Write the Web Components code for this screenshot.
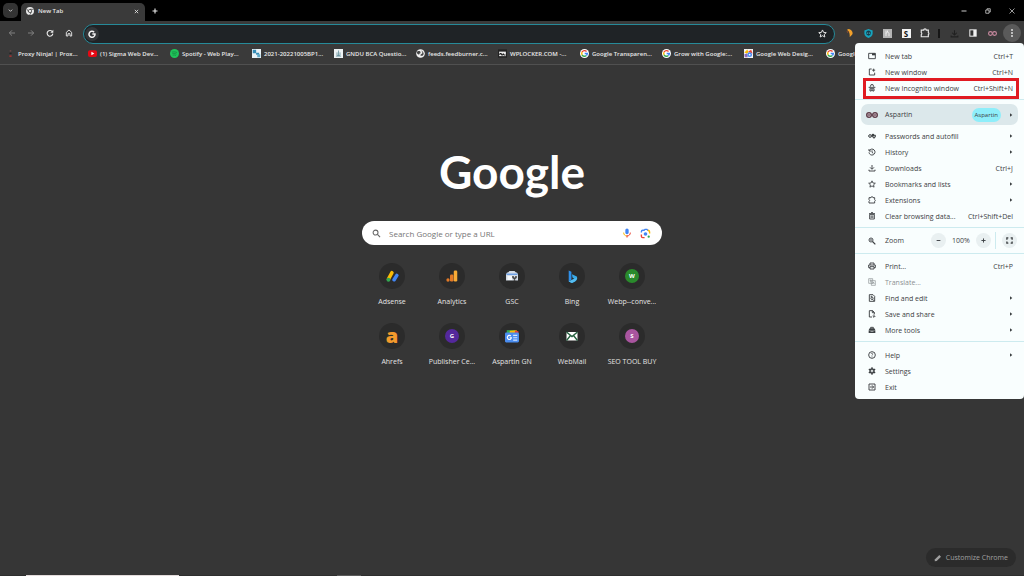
<!DOCTYPE html>
<html lang="en">
<head>
<meta charset="utf-8">
<title>New Tab</title>
<style>
html, body { margin: 0; background: #363636; }
body { font-family: "Open Sans", "Noto Sans", sans-serif; font-size: 7px; font-weight: 500; line-height: 10px; color: #e8e8e8; }
</style>
</head>
<body>
<browser-window></browser-window>
<script>
const S = 'fill="none" stroke="currentColor" stroke-width="2.8"';
const G = '<circle cx="12" cy="12" r="12" fill="#fff"/><g fill="none" stroke-width="3.8"><path d="M17.5 6.500A7.500 7.500 0 0 0 5.500 8.500" stroke="#ea4335"/><path d="M5.500 8.500a7.500 7.500 0 0 0 0 7" stroke="#fbbc05"/><path d="M5.500 15.500a7.500 7.500 0 0 0 11.500 2" stroke="#34a853"/><path d="M17 17.500a7.500 7.500 0 0 0 2.500-5.500h-7" stroke="#4285f4"/></g>';
const ICONS = {
  chevron: `<path d="M4 8l8 8 8-8" fill="none" stroke="currentColor" stroke-width="4"/>`,
  close: `<path d="M4 4l16 16M20 4L4 20" fill="none" stroke="currentColor" stroke-width="4"/>`,
  closeThin: `<path d="M2 2l20 20M22 2L2 22" fill="none" stroke="currentColor" stroke-width="3"/>`,
  plus: `<path d="M12 2v20M2 12h20" fill="none" stroke="currentColor" stroke-width="4.500"/>`,
  minus: `<path d="M3 12h18" fill="none" stroke="currentColor" stroke-width="4.500"/>`,
  minimize: `<path d="M2 12h20" fill="none" stroke="currentColor" stroke-width="4"/>`,
  restore: `<path d="M3 8h13v13H3zM8 8V3h13v13h-5" fill="none" stroke="currentColor" stroke-width="3.200"/>`,
  chrome: `<circle cx="12" cy="12" r="12" fill="#e8e8e8"/><circle cx="12" cy="12" r="5" fill="#e8e8e8" stroke="#3a3a3a" stroke-width="2"/><path d="M12 7h11M7.500 14.500L2 5M16.500 14.500L11 24" fill="none" stroke="#3a3a3a" stroke-width="2"/>`,
  back: `<path d="M21 12H4M12 4l-8 8 8 8" ${S}/>`,
  forward: `<path d="M3 12h17M12 4l8 8-8 8" ${S}/>`,
  reload: `<path d="M19.500 9A8.500 8.500 0 1 0 20.500 14" fill="none" stroke="currentColor" stroke-width="3.400"/><path d="M22 2v9h-9z" fill="currentColor"/>`,
  home: `<path d="M4 10l8-7 8 7v11h-5v-7H9v7H4z" ${S}/>`,
  gwhite: `<path d="M18.500 6.500A9 9 0 1 0 21 12h-8" fill="none" stroke="#f4f4f4" stroke-width="4.500"/>`,
  star: `<path d="M12 2.500l2.900 6.500 7.100.7-5.300 4.700 1.500 7-6.200-3.600-6.200 3.600 1.500-7L2 9.700 9.100 9z" fill="none" stroke="currentColor" stroke-width="2.600"/>`,
  crescent: `<path d="M8 0c9 0 15 6 15 13-1 5-5 8-9 11 1-8-1-17-7-20z" fill="#f2a12b"/><path d="M4 5l8 3-5 5z" fill="#7d4a30"/>`,
  shield: `<path d="M12 0l11 4v8c0 6-5 10-11 12C6 22 1 18 1 12V4z" fill="#16a5bf"/><path d="M6 9a6 5 0 0 1 12 0l-1 6-5 3-5-3z" fill="#173d4d"/><path d="M8 11h3M13 11h3" stroke="#6ae1ee" stroke-width="2"/>`,
  honey: `<path d="M0 0h24v24H0z" fill="#b4b4b4"/><path d="M8 4v15M8 12c2-5 8-4 8 1v6M12 4v4" fill="none" stroke="#eee" stroke-width="2.500"/>`,
  puzzle: `<path d="M3 5h6a3 3 0 0 1 6 0h5v6a3 3 0 0 1 0 5v5H3v-5a3 3 0 0 0 0-5z" ${S}/>`,
  download: `<path d="M12 3v12M6 10l6 6 6-6M3 17v4h18v-4" ${S}/>`,
  panel: `<path d="M1 1h22v22H1z" fill="#f2f2f2"/><path d="M4 4h9v16H4z" fill="#333"/>`,
  infinity: `<g fill="none" stroke="#c98aa0" stroke-width="3"><circle cx="6.500" cy="12" r="5"/><circle cx="17.500" cy="12" r="5"/></g>`,
  infinityDark: `<g fill="#cbb4bf" stroke="#5d3c48" stroke-width="2.400"><circle cx="6" cy="12" r="4.800"/><circle cx="18" cy="12" r="4.800"/></g><path d="M3 12h6M15 12h6" stroke="#5d3c48" stroke-width="2"/>`,
  dots: `<g fill="currentColor"><circle cx="12" cy="3" r="2.800"/><circle cx="12" cy="12" r="2.800"/><circle cx="12" cy="21" r="2.800"/></g>`,
  ninja: `<path d="M10 3h4v4h-4z" fill="#6d4a4a"/><path d="M9 10h6v3H9z" fill="#222"/><path d="M9 17h6v4H9z" fill="#a33"/>`,
  youtube: `<rect y="3" width="24" height="18" rx="5" fill="#e50914"/><path d="M9 7.500l8 4.500-8 4.500z" fill="#fff"/>`,
  spotify: `<circle cx="12" cy="12" r="12" fill="#1fc45a"/><path d="M5 8.500c5-1.500 10-1 14 1M6 12.500c4-1 8-.8 11.500 1M7 16.300c3-.8 6-.6 9 .8" fill="none" stroke="#157c3b" stroke-width="1.800"/>`,
  bp: `<path d="M0 0h24v24H0z" fill="#e9f2f7"/><path d="M2 2h9v9H2zM11 10h8v5h-8z" fill="#358bb5"/><path d="M14 14h8v8h-8z" fill="#61abc9"/>`,
  gndu: `<path d="M0 0h24v24H0z" fill="#eef3f4"/><path d="M12 4v14M8 9v8h8V9M5 19h14" fill="none" stroke="#5c8a96" stroke-width="2"/>`,
  globe: `<circle cx="12" cy="12" r="11.500" fill="#f1f1f1"/><path d="M4 6c5-1 9 0 8 4s-5 1-3 5c-3 0-6-2-7-5z" fill="#444"/><path d="M15 3c0 5 2 4 2 7s-3 3-5 5 2 4 5 3 4-5 3-8z" fill="#444"/>`,
  wpl: `<path d="M0 1h24v22H0z" fill="#222"/><path d="M3 7h18v12H3z" fill="#eee"/><path d="M5 16v-4h4v4h4v-3h2v3h5" fill="none" stroke="#111" stroke-width="2.600"/>`,
  google: G,
  gdesign: `<path d="M0 0h24v24H0z" fill="#f4f4f4"/><path d="M1 9l8-8 3 8-5 3z" fill="#fbbc05"/><path d="M11 7l8-5 4 10z" fill="#ea4335"/><path d="M1 14l7-2 2 10H2z" fill="#8a6ab8"/><circle cx="15" cy="15" r="6.500" fill="#4285f4"/><circle cx="15" cy="15" r="2.500" fill="#fff"/>`,
  tab: `<path d="M2 4h20v16H2z" ${S}/><path d="M12 4h10v6H12z" fill="currentColor"/>`,
  newWindow: `<path d="M11 3H4v18h16v-7" ${S}/><path d="M17 2v9M12.500 6.500h9" ${S}/>`,
  incognito: `<path d="M7 8l2-6h6l2 6M2 10h20M5 14h14M6 15v6h4v-5M18 15v6h-4v-5" ${S}/>`,
  key: `<g fill="none" stroke="currentColor" stroke-width="3"><circle cx="6" cy="12" r="4"/><path d="M10 10h13v4h-3v4h-4v-4h-6"/></g><circle cx="15" cy="9" r="4" fill="currentColor"/>`,
  history: `<path d="M4 8a9 9 0 1 1-1 5M3 3v6h6M12 7v6l4 3" ${S}/>`,
  trash: `<path d="M5 7h14v14H5zM3 5h18M9 2h6M9.500 10v8M14.500 10v8" fill="none" stroke="currentColor" stroke-width="2.800"/>`,
  zoom: `<circle cx="9" cy="9" r="6" ${S}/><path d="M13.500 13.500L22 22" fill="none" stroke="currentColor" stroke-width="3.500"/><path d="M9 6v6M6 9h6" stroke="currentColor" stroke-width="1.800"/>`,
  full: `<path d="M3 9V3h5M16 3h5v6M21 15v6h-5M8 21H3v-6" fill="none" stroke="currentColor" stroke-width="4.500"/>`,
  print: `<path d="M6 9V3h12v6M6 17H2V9h20v8h-4M6 14h12v7H6z" ${S}/>`,
  translate: `<path d="M2 2h12v14H2zM10 8h12v14H10z" fill="none" stroke="currentColor" stroke-width="2"/><path d="M5 7h6M8 5v8M14 18l2-6 3 6" fill="none" stroke="currentColor" stroke-width="2"/>`,
  find: `<path d="M4 2h11l5 5v15H4z" ${S}/><circle cx="12" cy="13" r="3.500" ${S}/><path d="M14 16l5 5M8 7h5" ${S}/>`,
  save: `<path d="M12 21H4V2h10l5 5v5M13 2v6h6" ${S}/><path d="M18 13v7M14 18l4 4 4-4" ${S}/>`,
  tools: `<path d="M8 8V4h8v4" ${S}/><path d="M2 12l3-5h14l3 5v2H2zM2 15h6v2h3v-2h2v2h3v-2h6v6H2z" fill="currentColor"/>`,
  help: `<circle cx="12" cy="12" r="10" ${S}/><path d="M9 9c1-4 7-2 5 1l-2 3v1M12 16v3" fill="none" stroke="currentColor" stroke-width="2"/>`,
  gear: `<circle cx="12" cy="12" r="6" fill="none" stroke="currentColor" stroke-width="4"/><path d="M12 1v5M12 18v5M2.500 6.500l4.300 2.500M17.200 15l4.300 2.500M2.500 17.500L6.800 15M17.200 9l4.300-2.500" stroke="currentColor" stroke-width="4"/><circle cx="12" cy="12" r="1.800" fill="currentColor"/>`,
  exit: `<path d="M3 3h18v18H3z" ${S}/><path d="M6 12h10M12 7l5 5-5 5" ${S}/>`,
  arrow: `<path d="M6 1l14 11L6 23z" fill="currentColor"/>`,
  search: `<circle cx="9.500" cy="9.500" r="6.500" ${S}/><path d="M14.500 14.500l7 7" fill="none" stroke="currentColor" stroke-width="3"/>`,
  mic: `<rect x="8" y="1" width="8" height="14" rx="4" fill="#4285f4"/><path d="M4 11c0 5 3 8 8 8" fill="none" stroke="#fbbc05" stroke-width="2.400"/><path d="M20 11c0 5-3 8-8 8" fill="none" stroke="#ea4335" stroke-width="2.400"/><path d="M12 18v5" stroke="#ea4335" stroke-width="2.600"/>`,
  lens: `<g fill="none" stroke-width="3"><path d="M3 10V8q0-3 3-3h3l2-2h4l2 2h1" stroke="#4285f4"/><path d="M3 14v4q0 3 3 3h4" stroke="#ea4335"/><path d="M17 5q4 0 4 5v2" stroke="#fbbc05"/></g><circle cx="12" cy="13" r="4" fill="#4285f4"/><circle cx="19" cy="19" r="2.500" fill="#34a853"/>`,
  adsense: `<path d="M4.500 17L11 5" stroke="#fbbc05" stroke-width="6.500" stroke-linecap="round"/><path d="M15 18l5-8" stroke="#4285f4" stroke-width="6.500" stroke-linecap="round"/><circle cx="4.500" cy="18" r="3.600" fill="#34a853"/>`,
  analytics: `<rect x="15.500" y="1" width="7" height="22" rx="2.500" fill="#f9ab35"/><rect x="8" y="9" width="7" height="14" rx="2.500" fill="#e37a27"/><circle cx="4" cy="20" r="3.300" fill="#e37a27"/>`,
  gsc: `<path d="M4 5l3-3h10l3 3h2l2 4v12H0V9l2-4z" fill="#d4dce6"/><path d="M1 7h22v3H1z" fill="#6da0e6"/><path d="M3 12h9v8H3z" fill="#f5f8fb"/><path d="M14 12v3l3 2 3-2v-3M17 17v5" fill="none" stroke="#444" stroke-width="3"/>`,
  bing: `<path d="M5 1l5 2v15l-5 3z" fill="#2f8fe8"/><path d="M11 8l9 4c2 4 0 7-3 9l-6 3-6-3 10-5-3-2z" fill="#37a9e9"/><path d="M5 21l11-5 4-2c0 4-2 6-4 7l-5 3z" fill="#55bdf0"/>`,
  gnews: `<path d="M3 2h14v6H3z" fill="#34a853"/><path d="M8 3l12-1 1 6H8z" fill="#fbbc05"/><path d="M17 3l6 1v5h-6z" fill="#ea4335"/><rect y="6" width="24" height="17" rx="2" fill="#4a8df0"/><path d="M10 12a3.500 3.500 0 1 0 1 3H8" fill="none" stroke="#fff" stroke-width="2"/><path d="M14 11h7M14 15h7M14 19h7" fill="none" stroke="#d6e6ff" stroke-width="2"/>`,
  mail: `<path d="M1 4h22v17H1z" fill="#fff"/><path d="M1 4l11 9L23 4M1 21l8-10M23 21l-8-10" fill="none" stroke="#25613f" stroke-width="2.800"/>`,
  pencil: `<path d="M2 22l1-6L16 3l5 5L8 21z" fill="currentColor"/>`
};

const define = (name, css, html) => customElements.define(name, class extends HTMLElement {
  connectedCallback() {
    if (this.shadowRoot) return;
    const base = '*{box-sizing:border-box}button,input{font:inherit;color:inherit;background:none;border:0;padding:0;margin:0;outline:0}button{display:grid;place-items:center}a{color:inherit;text-decoration:none}';
    this.attachShadow({ mode: 'open' }).innerHTML =
      `<style>${base}${css}</style>${typeof html === 'function' ? html(this) : html}`;
  }
});
const icon = (name, size = 8) => `<ui-icon name="${name}" style="--size:${size}px"></ui-icon>`;

define('ui-icon', ':host{display:block;flex:none;width:var(--size);height:var(--size)}svg{display:block;width:100%;height:100%}',
  el => `<svg viewBox="0 0 24 24" aria-hidden="true">${ICONS[el.getAttribute('name')]}</svg>`);

define('letter-badge', ':host{display:grid;place-items:center;flex:none;width:14px;height:14px;border-radius:7px;background:var(--fill);color:#fff;font-size:6px;font-weight:700;line-height:8px}', '<slot></slot>');

define('tab-strip', `
  :host{display:flex;align-items:flex-end;height:21px;background:#000;padding-left:3px}
  .list{width:15px;height:15px;border-radius:5px;background:#333;margin-bottom:3px}
  .tab{display:flex;align-items:center;gap:4px;width:124px;height:18px;margin-left:3px;padding:0 6px 2px 5px;border-radius:5px 5px 0 0;background:#3a3a3a;font-size:6px;font-weight:600}
  .tab span{flex:1}
  .add{width:20px;height:18px;padding-bottom:2px}
  .win{display:flex;margin-left:auto;height:21px;color:#ccc}
  .win button{width:24px}`, `
  <button class="list" aria-label="Search tabs">${icon('chevron', 5)}</button>
  <div class="tab">${icon('chrome')}<span>New Tab</span><button aria-label="Close tab">${icon('close', 5)}</button></div>
  <button class="add" aria-label="New tab">${icon('plus', 6)}</button>
  <div class="win"><button aria-label="Minimize">${icon('minimize', 6)}</button><button aria-label="Restore">${icon('restore', 6)}</button><button aria-label="Close">${icon('closeThin', 6)}</button></div>`);

define('tool-bar', `
  :host{display:flex;align-items:center;gap:3px;height:24px;padding:0 3px 0 4px;background:#3a3a3a;position:relative;z-index:2}
  button{width:16px;height:16px;flex:none}
  .off{color:#858585}
  .box{flex:1;display:flex;align-items:center;height:20px;margin:1px 3px 0 3px;padding:0 4px 0 1px;border:1px solid #268a99;border-radius:10px;background:#1f2326}
  .box .g{display:grid;place-items:center;width:14px;height:14px;border-radius:7px;background:#34373a}
  .box input{flex:1;min-width:0;padding:0 6px}
  .bar{width:7px;height:9px}
  .bar::before{content:"";display:block;width:2px;height:9px;margin-left:2px;background:#161616}
  .s{width:9px;height:9px;background:#f4f4f4;color:#111;font-size:8px;font-weight:700;line-height:9px}
  .s-wrap{display:grid;place-items:center;width:16px}
  .menu{width:18px;height:18px;border-radius:9px;background:#5a5a5a}
  app-menu{position:absolute;right:0;top:calc(100% - 2px)}`, `
  <button class="off" aria-label="Back">${icon('back')}</button>
  <button class="off" aria-label="Forward">${icon('forward')}</button>
  <button aria-label="Reload">${icon('reload')}</button>
  <button aria-label="Home">${icon('home')}</button>
  <div class="box"><span class="g">${icon('gwhite')}</span><input type="text" aria-label="Address and search bar"><button aria-label="Bookmark this tab">${icon('star', 9)}</button></div>
  <button aria-label="Extension">${icon('crescent')}</button>
  <button aria-label="Shield extension">${icon('shield', 9)}</button>
  <button aria-label="Shopping extension">${icon('honey', 9)}</button>
  <div class="s-wrap"><button class="s">S</button></div>
  <button aria-label="Extensions">${icon('puzzle', 10)}</button>
  <div class="bar"></div>
  <button aria-label="Downloads" style="color:#202020">${icon('download', 9)}</button>
  <button aria-label="Side panel">${icon('panel')}</button>
  <button aria-label="Profile">${icon('infinity', 9)}</button>
  <button class="menu" aria-label="Menu">${icon('dots')}</button>
  <app-menu></app-menu>`);

const marks = [['ninja', 'Proxy Ninja! | Prox...'], ['youtube', '(1) Sigma Web Dev...'], ['spotify', 'Spotify - Web Play...'], ['bp', '2021-20221005BP1...'], ['gndu', 'GNDU BCA Questio...'], ['globe', 'feeds.feedburner.c...'], ['wpl', 'WPLOCKER.COM -...'], ['google', 'Google Transparen...'], ['google', 'Grow with Google:...'], ['gdesign', 'Google Web Desig...'], ['google', 'Google Trends']];
define('bookmarks-bar', `
  :host{display:flex;height:20px;padding-left:6px;background:#3a3a3a;border-bottom:1px solid #505050;overflow:hidden;font-size:6px;font-weight:600}
  a{display:flex;align-items:center;gap:3px;flex:none;width:82px;height:17px;white-space:nowrap}`,
  marks.map(([i, t]) => `<a href="#">${icon(i, 9)}${t}</a>`).join(''));

define('menu-row', `
  :host{display:block;color:#3c4043}
  button{display:flex;align-items:center;width:100%;height:16px;padding:0 11px 0 13px;text-align:left}
  span{padding-top:1px}
  .t{flex:1;margin-left:9px}
  :host([disabled]){color:#8b8f92}
  :host([marked]){position:relative}
  :host([marked])::after{content:"";position:absolute;inset:-2px 5px -3px 8px;border:3px solid #e01b22}`,
  el => `<button>${icon(el.getAttribute('icon'))}<span class="t"><slot></slot></span>${el.hasAttribute('sub') ? icon('arrow', 4) : `<span>${el.getAttribute('keys') || ''}</span>`}</button>`);

const row = (i, t, extra = 'sub') => `<menu-row icon="${i}" ${extra}>${t}</menu-row>`;
define('app-menu', `
  :host{display:block;width:169px;padding:5px 0 4px;border-radius:4px;background:#f9fefe;color:#3c4043}
  hr{height:1px;border:0;margin:3px 0 4px;background:#cdebef}
  hr:last-of-type{margin-bottom:5px}
  .profile{display:flex;align-items:center;width:157px;height:21px;margin:0 6px 3px;padding:0 5px;border-radius:7px;background:#dce8eb}
  .t{flex:1;margin-left:9px;padding-top:1px}
  .profile .t{margin-left:7px;text-align:left}
  .chip{padding:2px 3px;border-radius:7px;background:#8eeefa;margin-right:8px;line-height:10px;font-size:6px}
  .zoom{display:flex;align-items:center;height:25px;margin:-4px 0 -3px;padding:0 7px 0 13px}
  .zoom button{width:15px;height:15px;border-radius:8px;background:#e9f0f1}
  .zoom b{font-weight:500;width:30px;padding-top:1px;text-align:center}
  .zoom i{width:1px;height:17px;background:#cdebef;margin:0 6px 0 4px}`,
  row('tab', 'New tab', 'keys="Ctrl+T"') + row('newWindow', 'New window', 'keys="Ctrl+N"') + row('incognito', 'New Incognito window', 'keys="Ctrl+Shift+N" marked') +
  `<hr><button class="profile">${icon('infinityDark', 12)}<span class="t">Aspartin</span><span class="chip">Aspartin</span>${icon('arrow', 4)}</button>` +
  row('key', 'Passwords and autofill') + row('history', 'History') + row('download', 'Downloads', 'keys="Ctrl+J"') + row('star', 'Bookmarks and lists') + row('puzzle', 'Extensions') + row('trash', 'Clear browsing data...', 'keys="Ctrl+Shift+Del"') +
  `<hr><div class="zoom">${icon('zoom')}<span class="t">Zoom</span><button aria-label="Zoom out">${icon('minus', 5)}</button><b>100%</b><button aria-label="Zoom in">${icon('plus', 5)}</button><i></i><button aria-label="Full screen">${icon('full', 7)}</button></div><hr>` +
  row('print', 'Print...', 'keys="Ctrl+P"') + row('translate', 'Translate...', 'disabled') + row('find', 'Find and edit') + row('save', 'Save and share') + row('tools', 'More tools') +
  '<hr>' + row('help', 'Help') + row('gear', 'Settings', '') + row('exit', 'Exit', ''));

define('short-cut', `
  :host{display:block}
  a{display:flex;flex-direction:column;align-items:center;height:60px;white-space:nowrap}
  .disc{display:grid;place-items:center;width:26px;height:26px;border-radius:13px;background:#2b2b2b;margin-bottom:8px}`,
  el => `<a href="#"><span class="disc"><slot></slot></span>${el.getAttribute('label')}</a>`);

const cut = (label, body) => `<short-cut label="${label}">${body}</short-cut>`;
define('new-tab-page', `
  :host{display:flex;flex-direction:column;align-items:center;flex:1;background:#363636;position:relative}
  .logo{margin:77px 0 0;font:700 46px/60px Lato,sans-serif;color:#fff}
  form{display:flex;align-items:center;gap:8px;width:300px;height:24px;margin-top:19px;padding:0 11px 0 10px;border-radius:12px;background:#fff;color:#666}
  input{flex:1;min-width:0;font-size:8px;font-weight:400;height:20px}
  input::placeholder{color:#757575;opacity:1}
  .grid{display:grid;grid-template-columns:repeat(5,60px);margin-top:18px;color:#e4e4e4}
  .custom{position:absolute;right:8px;bottom:8px;display:flex;align-items:center;gap:4px;height:19px;padding:0 8px;border-radius:10px;background:#2b2b2b;color:#a0a0a0;font-weight:400}`, `
  <h1 class="logo">Google</h1>
  <form role="search">${icon('search', 9)}<input type="search" aria-label="Search" placeholder="Search Google or type a URL"><button type="button" aria-label="Voice search">${icon('mic', 10)}</button><button type="button" aria-label="Image search">${icon('lens', 11)}</button></form>
  <nav class="grid">${cut('Adsense', icon('adsense', 13))}${cut('Analytics', icon('analytics', 12))}${cut('GSC', icon('gsc', 12))}${cut('Bing', icon('bing', 13))}${cut('Webp--conve...', '<letter-badge style="--fill:#2a8a2c">W</letter-badge>')}${cut('Ahrefs', '<letter-badge style="--fill:none;color:#f39a2c;font-size:20px;font-weight:800;line-height:14px">a</letter-badge>')}${cut('Publisher Ce...', '<letter-badge style="--fill:#54289c">G</letter-badge>')}${cut('Aspartin GN', icon('gnews', 14))}${cut('WebMail', icon('mail', 12))}${cut('SEO TOOL BUY', '<letter-badge style="--fill:#a9559f">S</letter-badge>')}</nav>
  <button class="custom">${icon('pencil')}Customize Chrome</button>`);

define('window-edge', ':host{display:flex;height:1px;padding-left:26px;background:#2e2e2e}.a{width:153px;background:#e4dcdc}.b{width:24px;margin-left:158px;background:#5a5a5a}', '<span class="a"></span><span class="b"></span>');

define('browser-window', ':host{display:flex;flex-direction:column;min-height:100vh}', '<tab-strip></tab-strip><tool-bar></tool-bar><bookmarks-bar></bookmarks-bar><new-tab-page></new-tab-page><window-edge></window-edge>');
</script>
</body>
</html>
